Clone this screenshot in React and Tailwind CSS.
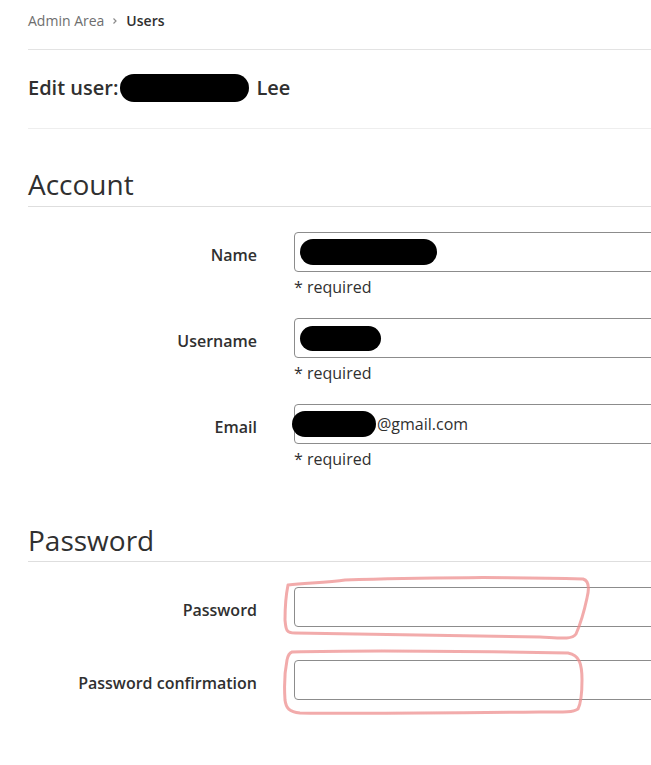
// App.jsx
const Redact = ({ className }) => (
  <span className={`inline-block bg-black rounded-full align-middle ${className}`} />
);

const Field = ({ label, children, required }) => (
  <div className="flex items-start">
    <label className="w-[229px] h-[40px] shrink-0 text-right text-[16px] font-semibold text-[#303030] leading-[46px]">
      {label}
    </label>
    <div className="ml-[37px] shrink-0">
      <div className="w-[420px] h-[40px] border border-[#8c8c8c] rounded-[4px] flex items-center px-[5px] text-[16px] text-[#303030]">
        {children}
      </div>
      {required && <p className="mt-[3px] text-[16px] leading-[24px] text-[#303030]">* required</p>}
    </div>
  </div>
);

const Scribbles = () => (
  <svg className="absolute left-0 top-0 pointer-events-none" width="651" height="765" viewBox="0 0 651 765">
    <g fill="none" stroke="#ee8f8f" strokeOpacity="0.75" strokeWidth="3" strokeLinecap="round" strokeLinejoin="round">
      <path d="M288 585 C310 583 330 582 345 580 C420 577 520 577 583 579 C590 581 589 590 587 598 C584 612 580 625 576 634 C572 640 560 638 540 637 C450 635 360 634 295 633 C285 633 286 628 285 620 C285 605 286 595 288 585 Z" />
      <path d="M292 652 C360 650 460 651 568 653 C580 655 582 665 582 680 C582 694 581 703 578 709 C572 713 560 712 540 712 C450 713 360 714 300 713 C289 712 286 708 285 700 C284 685 285 670 287 660 C288 655 289 653 292 652 Z" />
    </g>
  </svg>
);

export default function App() {
  return (
    <div className="relative w-[651px] h-[765px] overflow-hidden bg-white font-['Open_Sans',sans-serif] text-[#303030]">
      <div className="pl-[28px]">
        <nav className="h-[50px] border-b border-[#e3e3e3] flex items-center pb-[8px] text-[14px]">
          <span className="text-[#6e6e6e]">Admin Area</span>
          <svg className="mx-[7px] text-[#8a8a8a]" width="8" height="8" viewBox="0 0 8 8" fill="none" stroke="currentColor" strokeWidth="1.2">
            <path d="M2.5 1.5 L5 4 L2.5 6.5" />
          </svg>
          <span className="font-semibold text-[#303030]">Users</span>
        </nav>

        <div className="h-[79px] border-b border-[#eeeeee] flex items-center pb-[3px]">
          <h1 className="text-[20px] font-semibold flex items-center">
            Edit user:
            <Redact className="w-[129px] h-[28px] ml-[2px] mr-[7px]" />
            Lee
          </h1>
        </div>

        <h2 className="mt-[37px] text-[28px] leading-[36px] pb-[4px] border-b border-[#dedede]">Account</h2>

        <div className="mt-[25px] flex flex-col gap-[19px]">
          <Field label="Name" required>
            <Redact className="w-[137px] h-[26px]" />
          </Field>
          <Field label="Username" required>
            <Redact className="w-[81px] h-[25px]" />
          </Field>
          <Field label="Email" required>
            <Redact className="w-[84px] h-[26px] -ml-[8px] mr-[1px]" />
            <span>@gmail.com</span>
          </Field>
        </div>

        <h2 className="mt-[51px] text-[28px] leading-[36px] pb-[3px] border-b border-[#dedede]">Password</h2>

        <div className="mt-[25px] flex flex-col gap-[33px]">
          <Field label="Password" />
          <Field label="Password confirmation" />
        </div>
      </div>
      <Scribbles />
    </div>
  );
}
